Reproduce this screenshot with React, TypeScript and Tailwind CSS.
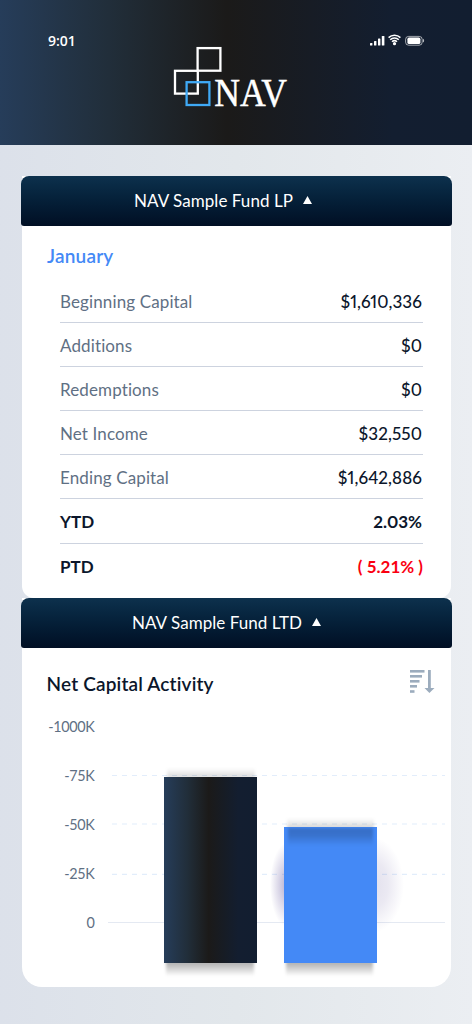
const rows = [
  { label: 'Beginning Capital', value: '$1,610,336' },
  { label: 'Additions', value: '$0' },
  { label: 'Redemptions', value: '$0' },
  { label: 'Net Income', value: '$32,550' },
  { label: 'Ending Capital', value: '$1,642,886' },
  { label: 'YTD', value: '2.03%', bold: true },
  { label: 'PTD', value: '( 5.21% )', bold: true, negative: true },
]

const ticks = [
  { label: '-1000K', y: 20 },
  { label: '-75K', y: 69, line: 63.5 },
  { label: '-50K', y: 118, line: 112 },
  { label: '-25K', y: 167, line: 162.3 },
  { label: '0', y: 216, line: 210.5 },
]

function StatusIcons() {
  return (
    <svg width="56" height="14" viewBox="0 0 56 14" fill="none" className="mt-px">
      <g fill="#fff">
        <rect x="1" y="9" width="2.4" height="2.5" rx=".6" />
        <rect x="5" y="7" width="2.4" height="4.5" rx=".6" />
        <rect x="9" y="4.5" width="2.4" height="7" rx=".6" />
        <rect x="12.8" y="2" width="2.6" height="9.5" rx=".6" />
        <circle cx="25.5" cy="9.7" r="1.6" />
      </g>
      <g stroke="#fff" strokeWidth="1.5">
        <path d="M19.6 3.6C22.9 0.3 28.1 0.3 31.4 3.6" />
        <path d="M21.2 5.7C23.6 3.3 27.4 3.3 29.8 5.7" />
        <path d="M23 7.8C24.4 6.5 26.6 6.5 28 7.8" />
      </g>
      <rect x="36.6" y="2.4" width="16.6" height="8.8" rx="3" stroke="#fff" strokeOpacity=".6" />
      <rect x="38.4" y="3.6" width="13" height="6.4" rx="1.6" fill="#fff" />
      <path d="M54 4.8c1.5.6 1.5 3.2 0 3.8z" fill="#fff" fillOpacity=".7" />
    </svg>
  )
}

function Logo() {
  return (
    <svg width="116" height="68" viewBox="0 0 116 68" fill="none" role="img" className="overflow-visible">
      <g strokeWidth="2.3" stroke="#fff">
        <rect x="24.6" y="3.1" width="22.8" height="22.6" />
        <rect x="2" y="25.8" width="22.8" height="22.8" />
      </g>
      <rect x="13.6" y="37.2" width="22.8" height="22.8" stroke="#3fa9f5" strokeWidth="2.3" />
      <text
        x="41.3"
        y="61.2"
        fontSize="41"
        textLength="72.6"
        lengthAdjust="spacingAndGlyphs"
        fill="#fff"
        stroke="#fff"
        strokeWidth=".5"
        fontFamily="'Liberation Serif', serif"
      >
        NAV
      </text>
    </svg>
  )
}

function FundHeader({ title, offset = 'pr-[27px]' }: { title: string; offset?: string }) {
  return (
    <button
      className={`-ml-px flex h-[50px] w-[431px] items-center justify-center gap-2.5 rounded-t-lg rounded-b-[3px] bg-linear-to-b from-[#0d314d] to-[#010f24] text-[17px] tracking-[0.05px] text-white ${offset}`}
    >
      <span>{title}</span>
      <svg width="9" height="8" viewBox="0 0 9 8" fill="#fff" className="mb-0.5">
        <path d="M4.5 0 9 8H0z" />
      </svg>
    </button>
  )
}

function SortIcon() {
  return (
    <svg width="25" height="24" viewBox="0 0 25 24" fill="#9cacbd">
      <rect x="0" y="0" width="14.5" height="2.6" />
      <rect x="0" y="5" width="12" height="2.6" />
      <rect x="0" y="10" width="9.5" height="2.6" />
      <rect x="0" y="15" width="7" height="2.6" />
      <rect x="0" y="20.2" width="4.5" height="2.6" />
      <path d="M18 0h2.8v18H24.5L19.4 23 14.5 18H18z" />
    </svg>
  )
}

function CapitalChart() {
  return (
    <svg width="429" height="275" viewBox="0 0 429 275" className="block">
      <defs>
        <linearGradient id="dark">
          <stop offset="0" stopColor="#263d5a" />
          <stop offset=".25" stopColor="#212e3a" />
          <stop offset=".48" stopColor="#1b1a19" />
          <stop offset=".8" stopColor="#131e30" />
          <stop offset="1" stopColor="#121e30" />
        </linearGradient>
        <linearGradient id="below" x1="0" y1="0" x2="0" y2="1">
          <stop offset="0" stopColor="#000" stopOpacity=".35" />
          <stop offset="1" stopColor="#000" stopOpacity="0" />
        </linearGradient>
        <linearGradient id="above" x1="0" y1="1" x2="0" y2="0">
          <stop offset="0" stopColor="#000" stopOpacity=".16" />
          <stop offset="1" stopColor="#000" stopOpacity="0" />
        </linearGradient>
        <linearGradient id="inner" x1="0" y1="0" x2="0" y2="1">
          <stop offset="0" stopColor="#000" stopOpacity=".2" />
          <stop offset=".4" stopColor="#000" stopOpacity=".17" />
          <stop offset="1" stopColor="#000" stopOpacity="0" />
        </linearGradient>
        <radialGradient id="glowLeft">
          <stop offset="0" stopColor="#48388c" stopOpacity=".4" />
          <stop offset=".5" stopColor="#48388c" stopOpacity=".2" />
          <stop offset="1" stopColor="#48388c" stopOpacity="0" />
        </radialGradient>
        <radialGradient id="glowRight">
          <stop offset="0" stopColor="#48388c" stopOpacity=".16" />
          <stop offset=".5" stopColor="#48388c" stopOpacity=".11" />
          <stop offset="1" stopColor="#48388c" stopOpacity="0" />
        </radialGradient>
        <filter id="soft" x="-10%" y="-30%" width="120%" height="160%">
          <feGaussianBlur stdDeviation="1.5" />
        </filter>
      </defs>

      {ticks.map((tick) => (
        <g key={tick.label}>
          <text x="72.6" y={tick.y} textAnchor="end" fontSize="14.4" letterSpacing="-.3" fill="#5f7084">
            {tick.label}
          </text>
          {tick.line && (
            <path d={`M90 ${tick.line}H423`} stroke="#e2edfb" strokeWidth="1.2" strokeDasharray="5 5" />
          )}
        </g>
      ))}
      <path d="M86 210.5H423" stroke="#e4e9f2" />

      <ellipse cx="265" cy="173" rx="17" ry="42" fill="url(#glowLeft)" />
      <ellipse cx="350" cy="173" rx="32" ry="48" fill="url(#glowRight)" />

      {/* Bar shadows */}
      <g filter="url(#soft)">
        <rect x="145" y="56" width="88" height="10" fill="url(#above)" />
        <rect x="144" y="249" width="88" height="15" fill="url(#below)" />
        <rect x="265" y="106" width="87" height="10" fill="url(#above)" />
        <rect x="264" y="249" width="87" height="15" fill="url(#below)" />
      </g>

      <rect x="142" y="65" width="93" height="186" fill="url(#dark)" />
      <rect x="262" y="115" width="93" height="136" fill="#4489f6" />
      <rect x="266" y="116" width="85" height="18" fill="url(#inner)" filter="url(#soft)" />
    </svg>
  )
}

export default function App() {
  return (
    <div className="h-[1024px] w-[472px] overflow-hidden bg-linear-to-r from-[#dce1ea] via-[#e2e7eb] to-[#ebeef2] font-['Lato',sans-serif] text-[#0b162b]">
      <header className="flex h-[145px] justify-between bg-[linear-gradient(90deg,#263d5a_0%,#212e3a_23%,#1b1a19_48%,#171c25_66%,#131e30_83%,#121e30_100%)] pt-[33px] pr-[47px] pl-12">
        <span className="w-[56px] font-['Open_Sans',sans-serif] text-[14px] leading-[15px] font-semibold text-white">
          9:01
        </span>
        <div className="mt-[12px] mr-[11px]">
          <Logo />
        </div>
        <StatusIcons />
      </header>

      <main className="mt-[31px] ml-[22px] w-[429px]">
        <section className="rounded-b-xl bg-white">
          <FundHeader title="NAV Sample Fund LP" />
          <div className="h-[372px] px-[38px] pt-[18px]">
            <h2 className="-ml-[13px] text-[19px] leading-6 font-semibold tracking-[0.2px] text-[#4489f6]">January</h2>
            <dl className="mt-[11px] w-[363px] divide-y divide-[#cdd3df]">
              {rows.map((row) => (
                <div
                  key={row.label}
                  className={`flex h-[44.1px] items-center justify-between pt-[2px] text-[17px] ${row.bold ? 'font-bold' : ''}`}
                >
                  <dt className={row.bold ? '' : 'tracking-[0.12px] text-[#5f7084]'}>{row.label}</dt>
                  <dd
                    className={`${row.negative ? 'text-[#fa0010]' : 'pr-px proportional-nums'} ${row.bold ? '' : 'font-medium tracking-[0.1px]'}`}
                  >
                    {row.value}
                  </dd>
                </div>
              ))}
            </dl>
          </div>
        </section>

        <section className="rounded-b-[20px] bg-white">
          <FundHeader title="NAV Sample Fund LTD" offset="pr-[20px]" />
          <div className="flex h-[64px] items-start justify-between pt-[22px] pr-[16px] pl-[24.5px]">
            <h2 className="mt-[2px] text-[19px] leading-6 font-semibold tracking-[0.17px]">Net Capital Activity</h2>
            <SortIcon />
          </div>
          <CapitalChart />
        </section>
      </main>
    </div>
  )
}
